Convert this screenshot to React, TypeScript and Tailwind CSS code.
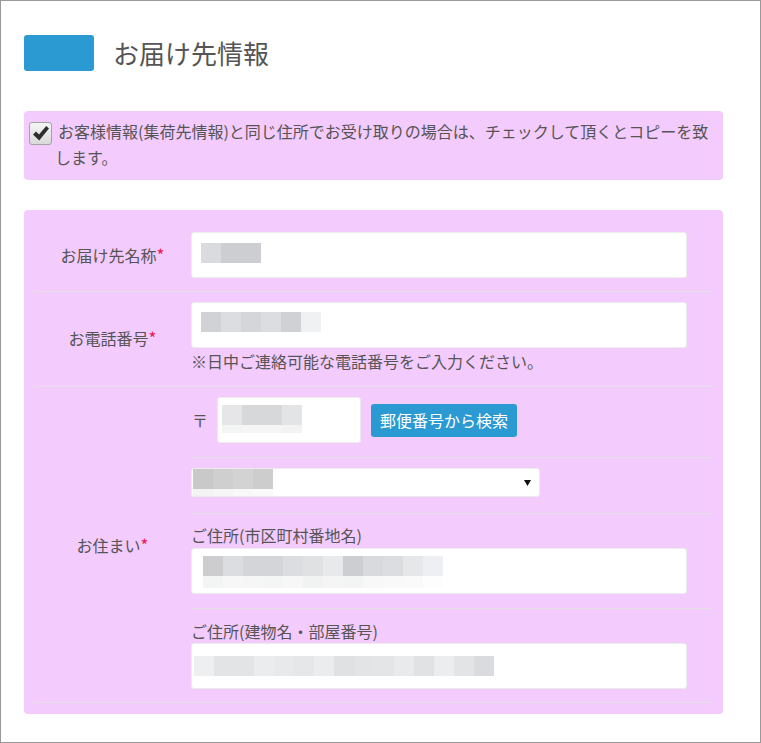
import React from "react"

const font = { fontFamily: '"Noto Sans CJK JP", "Noto Sans", sans-serif' }

// pixelated placeholder that stands in for masked values
const Mosaic = ({ top, bottom, bottomH = 8 }: { top: string[]; bottom?: string[]; bottomH?: number }) => (
  <div className="flex flex-col">
    <div className="flex">
      {top.map((c, i) => (
        <div key={i} className="w-[20px] h-[20px]" style={{ backgroundColor: c }} />
      ))}
    </div>
    {bottom && (
      <div className="flex">
        {bottom.map((c, i) => (
          <div key={i} className="w-[20px]" style={{ backgroundColor: c, height: bottomH }} />
        ))}
      </div>
    )}
  </div>
)

const Required = () => <span className="text-[#f0145a] text-[17px]">*</span>

const Label = ({ children }: { children: React.ReactNode }) => (
  <div className="w-[157px] shrink-0 flex items-center justify-center text-[16px] leading-[24px] text-[#555]">
    <span>
      {children}
      <Required />
    </span>
  </div>
)

const TextBox = ({ children, className = "" }: { children?: React.ReactNode; className?: string }) => (
  <div className={`h-[46px] bg-white border border-[#ececec] rounded-[3px] ${className}`}>{children}</div>
)

export default function App() {
  return (
    <div className="w-[761px] h-[743px] border border-[#999] bg-white overflow-hidden" style={font}>
      <div className="ml-[23px] w-[699px] pt-[34px]">
        {/* Header */}
        <div className="flex items-center gap-[19px]">
          <div className="w-[70px] h-[36px] rounded-[3px] bg-[#2b9ad2]" />
          <h1 className="text-[26px] leading-[36px] text-[#555] font-normal">お届け先情報</h1>
        </div>

        {/* Copy checkbox */}
        <div className="mt-[40px] h-[69px] rounded-[4px] bg-[#f4cbfd] flex pt-[7px] pl-[5px] pr-[8px]">
          <div className="w-[23px] h-[23px] mt-[4px] shrink-0 rounded-[3px] border border-[#a3a3a3] bg-gradient-to-b from-[#f6f6f6] to-[#d9d9d9] flex items-center justify-center">
            <svg width="18" height="17" viewBox="0 0 18 17">
              <path d="M1 9.5 L4 6.6 L7 9.6 L14.2 1 L17 3.6 L7.2 15.4 Z" fill="#2e2e2e" />
            </svg>
          </div>
          <p className="ml-[3px] text-[16px] leading-[26px] text-[#555] indent-[3px]">
            お客様情報(集荷先情報)と同じ住所でお受け取りの場合は、チェックして頂くとコピーを致します。
          </p>
        </div>

        {/* Form */}
        <div className="mt-[30px] rounded-[4px] bg-[#f4cbfd] px-[10px] pt-[8px] pb-[11px]">
          {/* name */}
          <div className="flex pt-[14px] pb-[13px] border-b border-[#e6dfe8]">
            <Label>お届け先名称</Label>
            <TextBox className="w-[496px] pl-[9px] pt-[10px]">
              <Mosaic top={["#dadbde", "#cdced1", "#cdced1"]} />
            </TextBox>
          </div>

          {/* phone */}
          <div className="flex pt-[10px] pb-[13px] border-b border-[#e6dfe8]">
            <Label>お電話番号</Label>
            <div className="flex flex-col">
              <TextBox className="w-[496px] pl-[9px] pt-[9px]">
                <Mosaic top={["#d1d2d5", "#dcdde0", "#d5d6d9", "#dcdde0", "#d0d1d4", "#f0f1f3"]} />
              </TextBox>
              <p className="mt-[1px] text-[16px] leading-[24px] text-[#555]">
                ※日中ご連絡可能な電話番号をご入力ください。
              </p>
            </div>
          </div>

          {/* address */}
          <div className="flex border-b border-[#e6dfe8]">
            <Label>お住まい</Label>
            <div className="flex-1 flex flex-col">
              <div className="flex items-center pt-[10px] pb-[14px] border-b border-[#e6dfe8]">
                <span className="w-[26px] text-[16px] leading-[24px] text-[#555] pl-[1px]">〒</span>
                <TextBox className="w-[144px] pl-[4px] pt-[7px]">
                  <Mosaic
                    top={["#e6e6e8", "#d7d8da", "#d7d8da", "#e3e4e6"]}
                    bottom={["#f3f4f4", "#f5f5f5", "#f5f5f5", "#f3f3f4"]}
                  />
                </TextBox>
                <button className="ml-[10px] h-[33px] px-[9px] rounded-[3px] bg-[#2b9ad2] text-white text-[16px] leading-[33px]">
                  郵便番号から検索
                </button>
              </div>

              <div className="pt-[10px] pb-[16px] border-b border-[#e6dfe8]">
                <div className="w-[349px] h-[29px] bg-white border border-[#ececec] rounded-[3px] flex items-start justify-between pl-[1px] pr-[8px]">
                  <Mosaic
                    top={["#c9c9c9", "#cfcfcf", "#d3d3d3", "#cdcdcd"]}
                    bottom={["#f4f4f4", "#f6f6f6", "#f8f8f8", "#fafafa"]}
                    bottomH={7}
                  />
                  <svg width="7" height="6" viewBox="0 0 7 6" className="mt-[11px]">
                    <path d="M0 0 H7 L3.5 6 Z" fill="#111" />
                  </svg>
                </div>
              </div>

              <div className="pt-[9px] pb-[14px] border-b border-[#e6dfe8]">
                <p className="text-[16px] leading-[24px] text-[#555]">ご住所(市区町村番地名)</p>
                <TextBox className="mt-[1px] w-[496px] pl-[11px] pt-[7px]">
                  <Mosaic
                    top={[
                      "#cdcdd0", "#dcdde0", "#d4d5d8", "#d4d5d8", "#dcdde0", "#e0e1e3",
                      "#e8e9eb", "#cdced1", "#d9dadd", "#dcdde0", "#e6e7e9", "#eeeff2",
                    ]}
                    bottom={[
                      "#f3f4f4", "#f7f7f8", "#f6f6f7", "#f4f5f5", "#f7f7f7", "#f1f2f2",
                      "#f5f5f6", "#f3f4f4", "#f8f8f8", "#f9f9f9", "#fafafa", "#fdfdfd",
                    ]}
                    bottomH={12}
                  />
                </TextBox>
              </div>

              <div className="pt-[10px] pb-[13px]">
                <p className="text-[16px] leading-[24px] text-[#555]">ご住所(建物名・部屋番号)</p>
                <TextBox className="w-[496px] pl-[2px] pt-[12px]">
                  <Mosaic
                    top={[
                      "#eeeff0", "#e3e4e6", "#e3e4e6", "#ebeced", "#e8e9ea", "#e6e7e8",
                      "#ebeced", "#e0e1e3", "#e3e4e6", "#e4e5e6", "#e9eaeb", "#e1e2e4",
                      "#ecedee", "#e3e4e6", "#dadbde",
                    ]}
                  />
                </TextBox>
              </div>
            </div>
          </div>
        </div>
      </div>
    </div>
  )
}
